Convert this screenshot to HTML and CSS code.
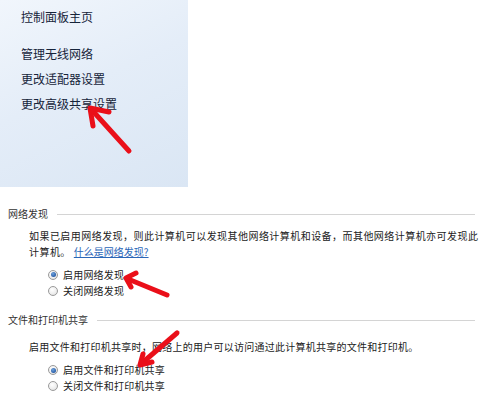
FILE: index.html
```html
<!DOCTYPE html>
<html lang="zh-CN">
<head>
<meta charset="utf-8">
<title>网络和共享中心</title>
<link rel="stylesheet" href="styles.css">
</head>
<body>
<div class="page">
  <nav class="sidebar">
    <a class="home">控制面板主页</a>
    <ul class="tasks">
      <li>管理无线网络</li>
      <li>更改适配器设置</li>
      <li>更改高级共享设置</li>
    </ul>
  </nav>

  <section class="group group-discovery">
    <div class="group-title"><span>网络发现</span><i class="rule"></i></div>
    <p class="desc">如果已启用网络发现，则此计算机可以发现其他网络计算机和设备，而其他网络计算机亦可发现此计算机。<a class="link">什么是网络发现?</a></p>
    <div class="options">
      <label class="opt"><span class="radio checked"></span>启用网络发现</label>
      <label class="opt"><span class="radio"></span>关闭网络发现</label>
    </div>
  </section>

  <section class="group group-sharing">
    <div class="group-title"><span>文件和打印机共享</span><i class="rule"></i></div>
    <p class="desc">启用文件和打印机共享时，网络上的用户可以访问通过此计算机共享的文件和打印机。</p>
    <div class="options">
      <label class="opt"><span class="radio checked"></span>启用文件和打印机共享</label>
      <label class="opt"><span class="radio"></span>关闭文件和打印机共享</label>
    </div>
  </section>

  <svg class="annotations" width="483" height="400" viewBox="0 0 483 400">
    <g fill="none" stroke="#ea0f19" stroke-width="5" stroke-linecap="round" stroke-linejoin="round">
      <path d="M129 151 L91 109"/>
      <path d="M109 112 L90 108 L93 126"/>
      <path d="M167 295 L128 279"/>
      <path d="M136 273 L126 278 L131 287"/>
      <path d="M177 333 L142 363"/>
      <path d="M143 354 L140 365 L152 362"/>
    </g>
  </svg>
</div>
</body>
</html>
```

FILE: styles.css
```css
* { box-sizing: border-box; }

html, body {
  margin: 0;
  padding: 0;
  background: #ffffff;
}

body {
  font-family: "Noto Sans CJK SC", "Microsoft YaHei", sans-serif;
  color: #1e1e1e;
}

.page {
  position: relative;
  width: 483px;
  height: 400px;
  overflow: hidden;
}

.sidebar {
  width: 188px;
  height: 187px;
  padding: 7px 0 0 21px;
  background: linear-gradient(155deg, #f1f6fc 0%, #e4edf8 45%, #dae6f4 100%);
  font-size: 12px;
}

.home {
  display: block;
  line-height: 20px;
  color: #16243a;
}

.tasks {
  list-style: none;
  margin: 13.5px 0 0;
  padding: 0;
}

.tasks li {
  line-height: 25px;
  color: #16243a;
}

.group {
  font-size: 10px;
  letter-spacing: 0.2px;
}

.group-discovery { margin-top: 19px; }
.group-sharing { margin-top: 13.5px; }

.group-title {
  display: flex;
  align-items: center;
  padding-left: 8px;
  padding-right: 8px;
  line-height: 16px;
  color: #333333;
  letter-spacing: 0;
}

.group-title .rule {
  flex: 1;
  height: 1px;
  margin-left: 9px;
  background: #d4d4d4;
}

.desc {
  margin: 6px 4px 0 29px;
  line-height: 16px;
  color: #222222;
  letter-spacing: 0.45px;
}

.group-sharing .desc {
  margin-top: 11px;
  letter-spacing: 0.25px;
}

.link {
  margin-left: 3px;
  color: #2a66b8;
  text-decoration: underline;
  letter-spacing: 0;
}

.options {
  display: flex;
  flex-direction: column;
  margin-top: 6.5px;
  padding-left: 48px;
}

.group-sharing .options { margin-top: 7px; }

.opt {
  display: flex;
  align-items: center;
  gap: 5px;
  line-height: 16px;
  height: 16px;
  color: #222222;
}

.radio {
  position: relative;
  flex: none;
  width: 10px;
  height: 10px;
  border-radius: 50%;
  border: 1px solid #9a9a9a;
  background: radial-gradient(circle at 40% 35%, #ffffff 0%, #eeeeee 55%, #d6d6d6 100%);
}

.radio.checked::after {
  content: "";
  position: absolute;
  left: 1.5px;
  top: 1.5px;
  width: 5px;
  height: 5px;
  border-radius: 50%;
  background: radial-gradient(circle at 40% 35%, #6fa2dc 0%, #2a5ea8 70%, #1d4a8a 100%);
}

.annotations {
  position: absolute;
  left: 0;
  top: 0;
  pointer-events: none;
}
```
